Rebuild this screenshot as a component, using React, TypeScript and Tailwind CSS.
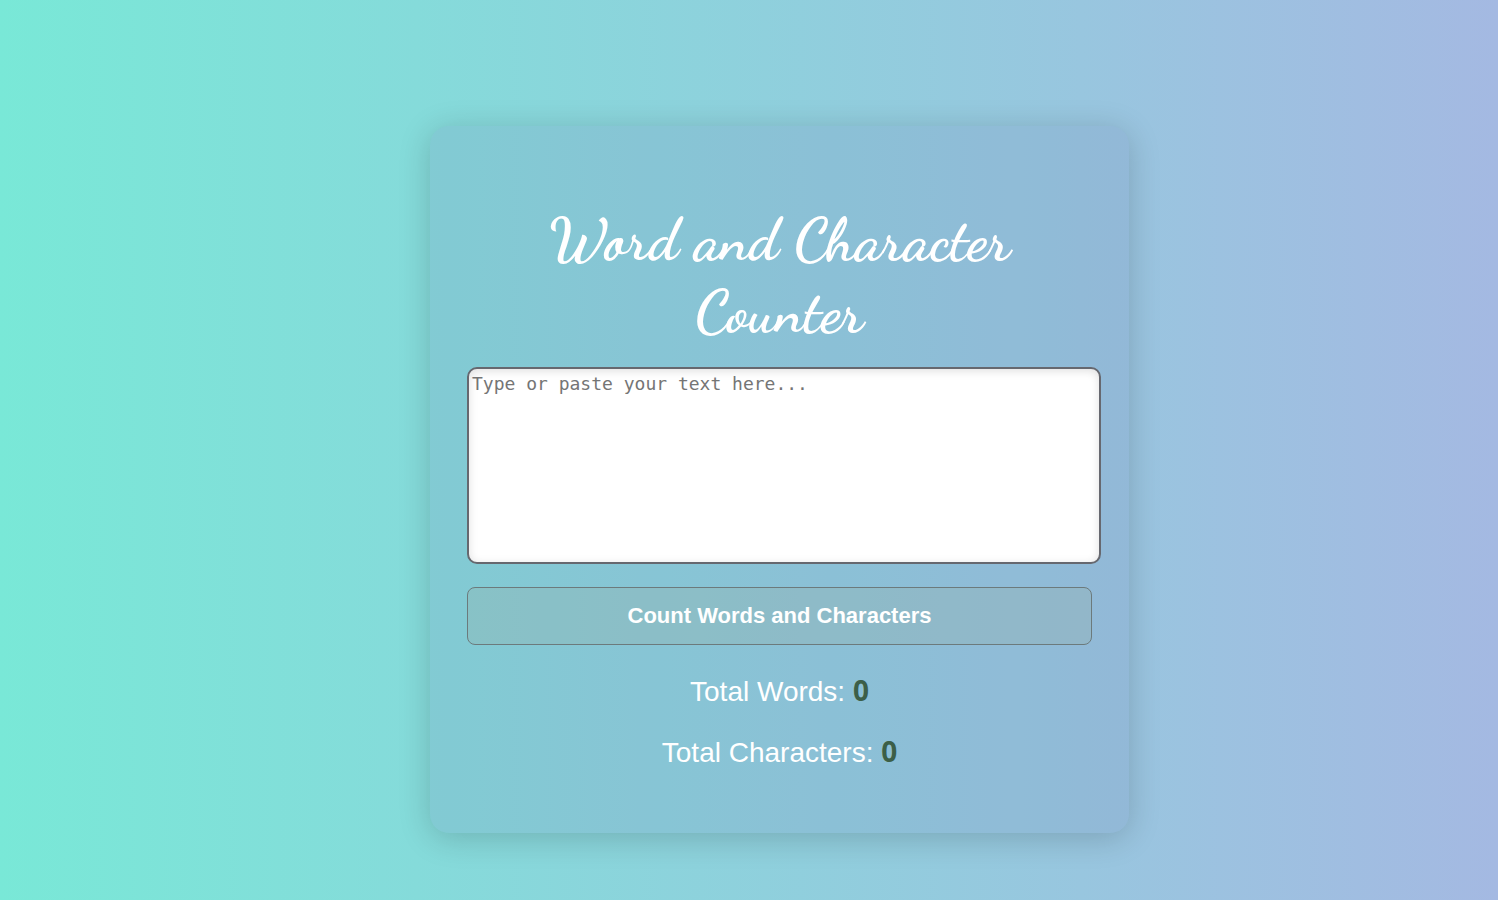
import { useState } from 'react';

export default function App() {
  const [text, setText] = useState('');
  const [counts, setCounts] = useState({ words: 0, characters: 0 });

  const count = () => {
    const words = text.trim().split(/\s+/).filter(Boolean).length;
    setCounts({ words, characters: text.length });
  };

  return (
    <main className="flex min-h-screen items-center justify-center bg-linear-to-r/srgb from-[#79e8d7] to-[#a4b9e2] pt-[59px] pl-[61px] font-['Liberation_Sans',Arial,sans-serif]">
      <section className="w-full max-w-[699px] rounded-[19px] bg-[rgba(114,132,184,0.18)] px-[37px] pt-[78px] pb-[60px] text-center text-white shadow-[0_5px_32px_rgba(0,0,0,0.18)]">
        <h1 className="mx-auto max-w-[520px] font-['Dancing_Script',cursive] text-[60px] leading-[72px] font-bold">
          Word and Character Counter
        </h1>
        <textarea
          aria-label="Text to count"
          value={text}
          onChange={(e) => setText(e.target.value)}
          placeholder="Type or paste your text here..."
          className="mt-[19px] block h-[197px] w-[calc(100%+9px)] resize-none rounded-[10px] border-2 border-[#66686f] bg-white px-[3px] py-[3px] font-['DejaVu_Sans_Mono',monospace] text-[18px] leading-6 text-gray-800 shadow-[inset_0_2px_10px_rgba(0,0,0,0.13)] placeholder:text-[#757575]"
        />
        <button
          type="button"
          onClick={count}
          className="mt-[23px] h-[58px] w-full rounded-lg border border-[#6c7a7c] bg-[rgba(150,175,170,0.3)] pb-0.5 text-[22px] font-bold"
        >
          Count Words and Characters
        </button>
        <p className="mt-[26px] text-[28px] leading-[41px]">
          Total Words:{' '}
          <span className="font-['Open_Sans',sans-serif] leading-none font-bold text-[#3c5f48]">{counts.words}</span>
        </p>
        <p className="mt-5 text-[28px] leading-[41px]">
          Total Characters:{' '}
          <span className="font-['Open_Sans',sans-serif] leading-none font-bold text-[#3c5f48]">{counts.characters}</span>
        </p>
      </section>
    </main>
  );
}
